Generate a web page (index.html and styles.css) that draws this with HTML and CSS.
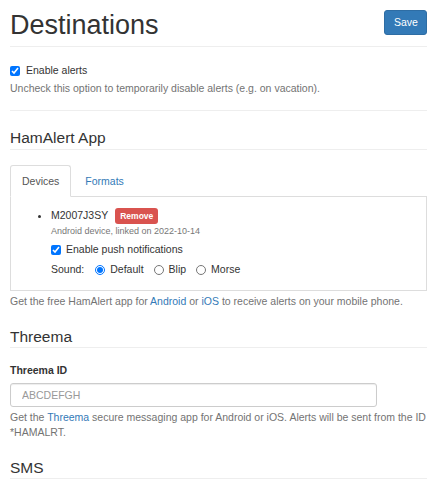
FILE: index.html
```html
<!DOCTYPE html>
<html>
<head>
<meta charset="utf-8">
<link rel="stylesheet" href="styles.css">
</head>
<body>
<div class="page">
  <div class="page-head">
    <h1 class="title">Destinations</h1>
    <button class="btn-save">Save</button>
  </div>

  <label class="check-line top-check"><input type="checkbox" checked><span>Enable alerts</span></label>
  <p class="help help-first">Uncheck this option to temporarily disable alerts (e.g. on vacation).</p>
  <div class="rule"></div>

  <h3 class="section-title first-section">HamAlert App</h3>
  <div class="tabs">
    <div class="tab active">Devices</div>
    <div class="tab link">Formats</div>
  </div>
  <div class="tab-panel">
    <ul class="devices">
      <li>
        <div class="device-row"><span>M2007J3SY</span><span class="btn-remove">Remove</span></div>
        <div class="device-meta">Android device, linked on 2022-10-14</div>
        <label class="check-line push-check"><input type="checkbox" checked><span>Enable push notifications</span></label>
        <div class="sound-row">
          <span class="sound-label">Sound:</span>
          <label class="radio-opt"><input type="radio" name="snd" checked><span>Default</span></label>
          <label class="radio-opt"><input type="radio" name="snd"><span>Blip</span></label>
          <label class="radio-opt"><input type="radio" name="snd"><span>Morse</span></label>
        </div>
      </li>
    </ul>
  </div>
  <p class="help help-after">Get the free HamAlert app for <a>Android</a> or <a>iOS</a> to receive alerts on your mobile phone.</p>

  <h3 class="section-title">Threema</h3>
  <label class="field-label">Threema ID</label>
  <input class="text-input" type="text" placeholder="ABCDEFGH">
  <p class="help help-after">Get the <a>Threema</a> secure messaging app for Android or iOS. Alerts will be sent from the ID *HAMALRT.</p>

  <h3 class="section-title">SMS</h3>
</div>
</body>
</html>
```

FILE: styles.css
```css
* { box-sizing: border-box; }
html, body { margin: 0; padding: 0; background: #fff; }
body {
  font-family: "Liberation Sans", Arial, sans-serif;
  font-size: 10.5px;
  line-height: 15px;
  color: #333;
}
.page { padding: 0 10px; }
a { color: #337ab7; text-decoration: none; }

.page-head {
  display: flex;
  justify-content: space-between;
  align-items: flex-start;
  margin-top: 10px;
  padding-bottom: 6px;
  border-bottom: 1px solid #eee;
}
.title {
  margin: 0;
  font-size: 27px;
  line-height: 30px;
  font-weight: 500;
  color: #333;
}
.btn-save {
  font-family: inherit;
  font-size: 10.5px;
  line-height: 15px;
  color: #fff;
  background: #337ab7;
  border: 1px solid #2e6da4;
  border-radius: 3px;
  padding: 4px 9px;
  width: 43px;
  height: 25px;
}

.check-line {
  display: flex;
  align-items: center;
  height: 15px;
}
.check-line input {
  width: 10px;
  height: 10px;
  margin: 0 6px 0 0;
  accent-color: #0075ff;
}
.top-check { margin-top: 16px; }
.help { margin: 0; color: #737373; }
.help-first { margin-top: 3px; }
.rule { height: 1px; background: #eee; margin-top: 14px; }

.section-title {
  margin: 19px 0 0;
  font-size: 15.5px;
  line-height: 17px;
  font-weight: 500;
  padding-bottom: 2px;
  border-bottom: 1px solid #eee;
}
.first-section { margin-top: 18px; padding-bottom: 3px; }

.tabs {
  display: flex;
  margin-top: 15px;
  border-bottom: 1px solid #ddd;
}
.tab {
  padding: 8px 11px 7px;
  border: 1px solid transparent;
  border-radius: 3px 3px 0 0;
  margin-bottom: -1px;
  margin-right: 2px;
}
.tab.active {
  border-color: #ddd;
  border-bottom-color: #fff;
  background: #fff;
  color: #555;
}
.tab.link { color: #337ab7; }

.tab-panel {
  border: 1px solid #ddd;
  border-top: none;
  padding: 10px 0 13px;
}
.devices { margin: 0; padding-left: 40px; }
.device-row {
  display: flex;
  align-items: center;
  height: 17px;
  gap: 7px;
}
.btn-remove {
  display: inline-block;
  background: #d9534f;
  color: #fff;
  font-weight: bold;
  font-size: 8.5px;
  line-height: 16px;
  height: 16px;
  padding: 0 5px;
  border-radius: 3px;
}
.device-meta {
  margin-top: 1px;
  font-size: 9px;
  line-height: 13px;
  color: #777;
}
.push-check { margin-top: 4px; }
.push-check input { margin-right: 5px; }

.sound-row {
  display: flex;
  align-items: center;
  height: 15px;
  margin-top: 5px;
}
.sound-label { margin-right: 11px; }
.radio-opt {
  display: flex;
  align-items: center;
  margin-right: 10px;
}
.radio-opt input {
  width: 10px;
  height: 10px;
  margin: 0 5px 0 0;
  accent-color: #0075ff;
}

.help-after { margin-top: 3px; }

.field-label {
  display: block;
  margin-top: 15px;
  font-weight: bold;
}
.text-input {
  display: block;
  margin-top: 5px;
  width: 367px;
  height: 24px;
  border: 1px solid #ccc;
  border-radius: 3px;
  padding: 0 11px;
  font-family: inherit;
  font-size: 10.5px;
  color: #555;
  box-shadow: inset 0 1px 1px rgba(0,0,0,.075);
}
.text-input::placeholder { color: #999; }
```
